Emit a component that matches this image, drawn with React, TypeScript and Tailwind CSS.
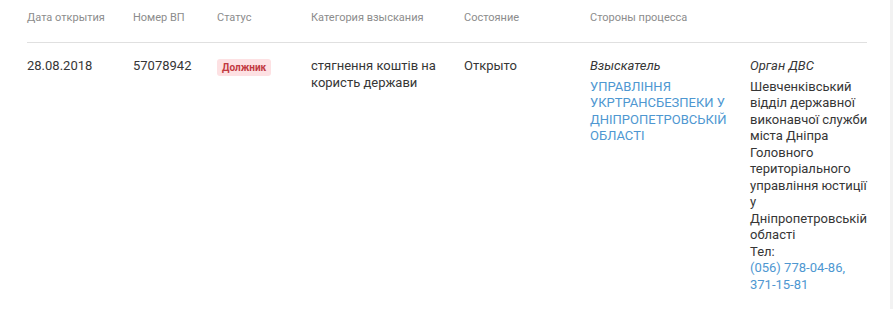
import React from "react";

const columns = [
  { title: "Дата открытия", width: "w-[106px]" },
  { title: "Номер ВП", width: "w-[84px]" },
  { title: "Статус", width: "w-[94px]" },
  { title: "Категория взыскания", width: "w-[153px]" },
  { title: "Состояние", width: "w-[126px]" },
  { title: "Стороны процесса", width: "flex-1" },
];

const organLines = [
  "Шевченківський",
  "відділ державної",
  "виконавчої служби",
  "міста Дніпра",
  "Головного",
  "територіального",
  "управління юстиції",
  "у",
  "Дніпропетровській",
  "області",
];

export default function App() {
  return (
    <div className="flex w-[893px] h-[309px] bg-white font-['Roboto',sans-serif] text-[#363636]">
      <div className="flex-1 pl-[27px] pr-[23px]">
        {/* table header */}
        <div className="flex h-[43px] pt-[11px] border-b border-[#e0e0e0] text-[11px] leading-[14px] text-[#8c8c8c]">
          {columns.map((c) => (
            <div key={c.title} className={c.width}>
              {c.title}
            </div>
          ))}
        </div>

        {/* single record */}
        <div className="flex pt-[15px] text-[13px] leading-[16.5px]">
          <div className="w-[106px]">28.08.2018</div>
          <div className="w-[84px]">57078942</div>
          <div className="w-[94px] pt-[1px]">
            <span className="inline-block rounded-[3px] bg-[#fde1e3] px-[5px] py-[1px] text-[10px] leading-[15px] font-bold text-[#c23a42]">
              Должник
            </span>
          </div>
          <div className="w-[153px] pr-[10px]">стягнення коштів на користь держави</div>
          <div className="w-[126px]">Открыто</div>
          <div className="w-[160px] pr-[12px]">
            <div className="italic mb-[4px]">Взыскатель</div>
            <div className="text-[#4e97d1] uppercase">
              Управління Укртрансбезпеки у Дніпропетровській області
            </div>
          </div>
          <div className="flex-1 whitespace-nowrap">
            <div className="italic mb-[4px]">Орган ДВС</div>
            {organLines.map((line, i) => (
              <div key={i}>{line}</div>
            ))}
            <div>Тел:</div>
            <div className="text-[#4e97d1]">(056) 778-04-86,</div>
            <div className="text-[#4e97d1]">371-15-81</div>
          </div>
        </div>
      </div>
      <div className="w-[6px] bg-[#f2f2f2]" />
    </div>
  );
}
